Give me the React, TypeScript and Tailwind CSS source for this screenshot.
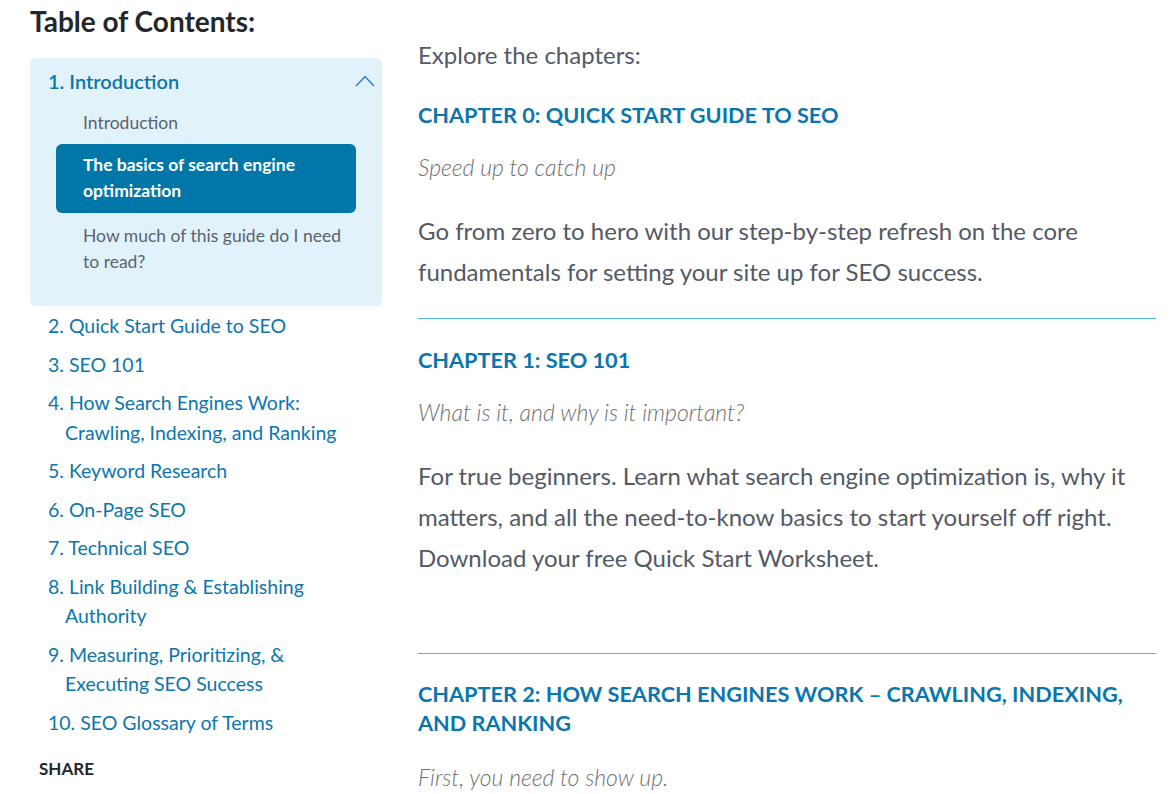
import React from 'react';

const chapters = [
  '2. Quick Start Guide to SEO',
  '3. SEO 101',
  '4. How Search Engines Work: Crawling, Indexing, and Ranking',
  '5. Keyword Research',
  '6. On-Page SEO',
  '7. Technical SEO',
  '8. Link Building & Establishing Authority',
  '9. Measuring, Prioritizing, & Executing SEO Success',
  '10. SEO Glossary of Terms',
];

const ChevronUp = () => (
  <svg width="20" height="12" viewBox="0 0 20 12" fill="none">
    <polyline points="1,11 10,1.5 19,11" stroke="#2a7de1" strokeWidth="1.5" />
  </svg>
);

const Sidebar = () => (
  <aside className="w-[352px] shrink-0 ml-[30px]">
    <h2 className="mt-[4px] text-[28px] leading-[34px] font-bold text-[#23262b]">Table of Contents:</h2>

    <div className="mt-[20px] bg-[#e2f2fa] rounded-[6px] pt-[9px] pb-[31px]">
      <div className="flex items-center justify-between pl-[18px] pr-[7px]">
        <span className="text-[20px] leading-[28px] font-semibold text-[#0b76ad]">1. Introduction</span>
        <ChevronUp />
      </div>
      <ul className="mx-[26px] mt-[15px] flex flex-col gap-[8px] text-[17.5px] leading-[26px]">
        <li className="px-[27px] text-[#5b6270]">Introduction</li>
        <li className="pl-[27px] pr-[10px] pt-[8px] pb-[9px] bg-[#0077a8] rounded-[6px] text-white font-bold">
          The basics of search engine optimization
        </li>
        <li className="mt-[2px] pl-[27px] pr-[10px] text-[#5b6270]">How much of this guide do I need to read?</li>
      </ul>
    </div>

    <ul className="mt-[5px] ml-[18px] mr-[27px] flex flex-col gap-[9px]">
      {chapters.map((c) => (
        <li key={c} className="pl-[17px] indent-[-17px] text-[19.5px] leading-[29.5px] text-[#0b76ad]">
          {c}
        </li>
      ))}
    </ul>

    <div className="mt-[22px] ml-[9px] text-[17px] leading-[20px] font-bold text-[#23262b]">SHARE</div>
  </aside>
);

const Heading = ({ children, className = '' }: { children: React.ReactNode; className?: string }) => (
  <h3 className={`text-[21.7px] leading-[29px] font-bold uppercase text-[#0b76ad] ${className}`}>{children}</h3>
);

const Subtitle = ({ children, className = 'mt-[21px]' }: { children: React.ReactNode; className?: string }) => (
  <p className={`text-[23px] leading-[33px] italic font-light text-[#6d6f73] ${className}`}>{children}</p>
);

const Body = ({ children }: { children: React.ReactNode }) => (
  <p className="mt-[26px] text-[24px] leading-[41px] text-[#535965]">{children}</p>
);

export default function App() {
  return (
    <div className="w-[1175px] h-[794px] overflow-hidden bg-white font-['Lato','Noto_Sans',sans-serif] flex">
      <Sidebar />
      <main className="ml-[36px] w-[738px] pt-[38px]">
        <p className="text-[24px] leading-[33px] text-[#535965]">Explore the chapters:</p>

        <Heading className="mt-[30px]">Chapter 0: Quick Start Guide to SEO</Heading>
        <Subtitle>Speed up to catch up</Subtitle>
        <Body>
          Go from zero to hero with our step-by-step refresh on the core fundamentals for setting your site up for SEO
          success.
        </Body>

        <hr className="mt-[26px] border-0 border-t border-[#4fb6e6]" />

        <Heading className="mt-[27px]">Chapter 1: SEO 101</Heading>
        <Subtitle>What is it, and why is it important?</Subtitle>
        <Body>
          For true beginners. Learn what search engine optimization is, why it matters, and all the need-to-know basics
          to start yourself off right. Download your free Quick Start Worksheet.
        </Body>

        <hr className="mt-[75px] border-0 border-t border-[#4fb6e6]" />

        <Heading className="mt-[26px]">Chapter 2: How Search Engines Work – Crawling, Indexing, and Ranking</Heading>
        <Subtitle className="mt-[23px]">First, you need to show up.</Subtitle>
      </main>
    </div>
  );
}
